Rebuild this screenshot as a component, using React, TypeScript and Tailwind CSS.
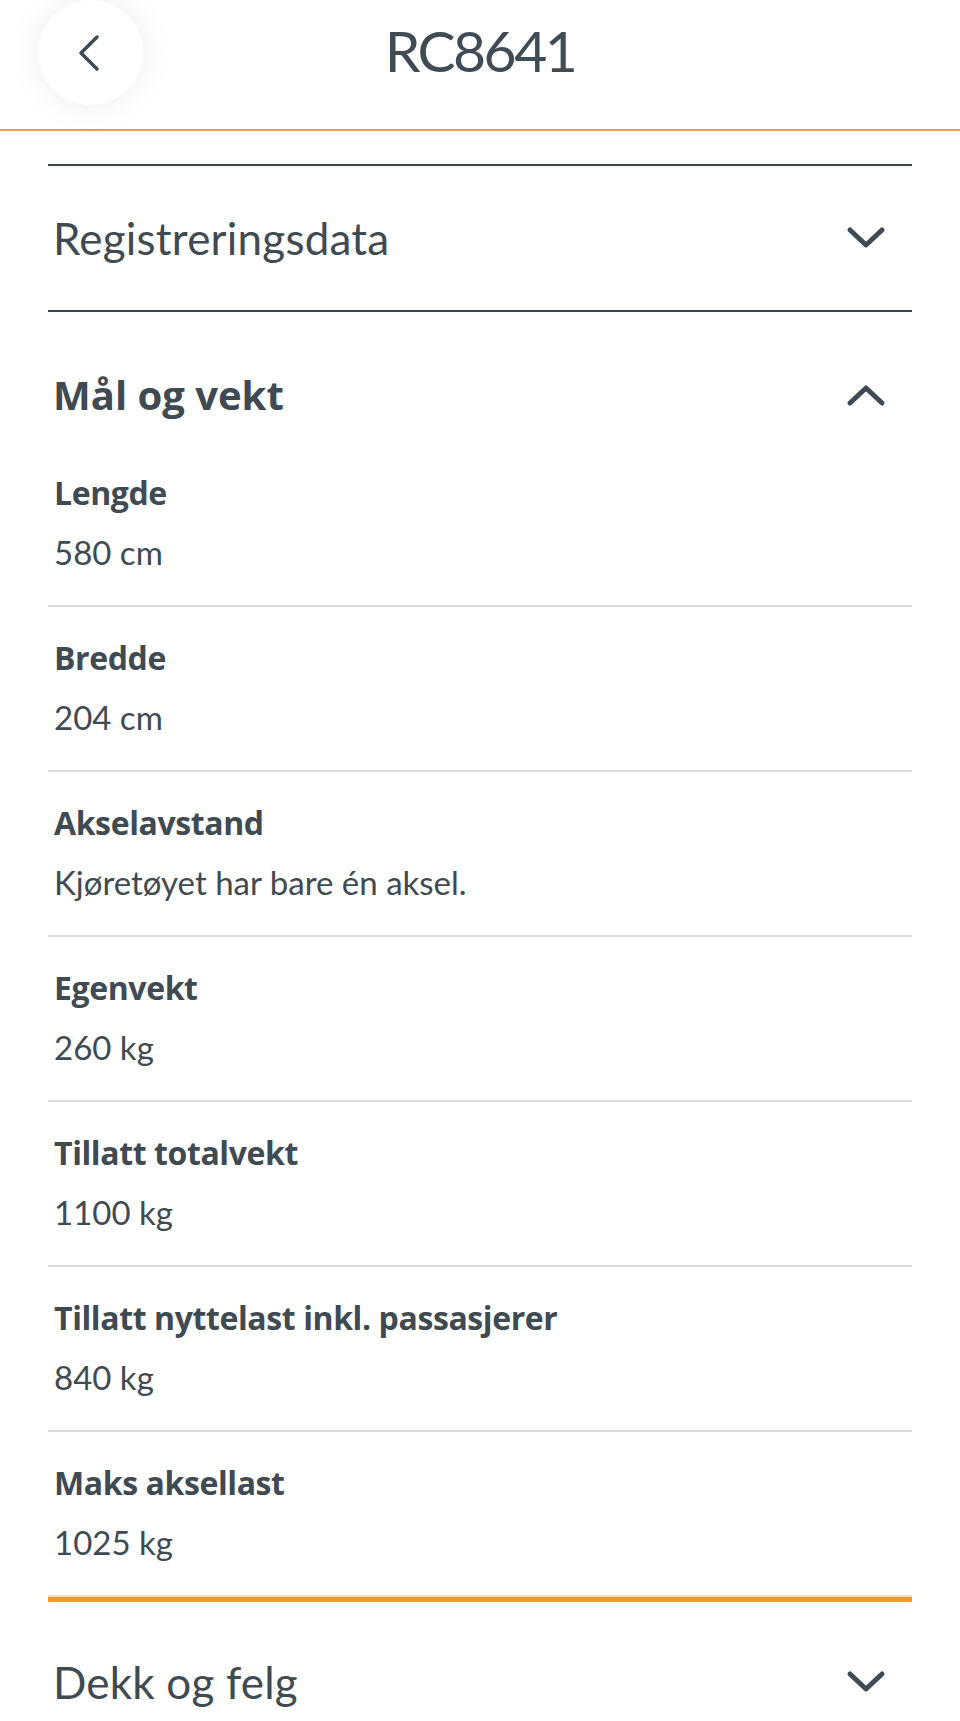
import type { ReactNode } from 'react'

const rows = [
  { label: 'Lengde', value: '580 cm' },
  { label: 'Bredde', value: '204 cm' },
  { label: 'Akselavstand', value: 'Kjøretøyet har bare én aksel.' },
  { label: 'Egenvekt', value: '260 kg' },
  { label: 'Tillatt totalvekt', value: '1100 kg' },
  { label: 'Tillatt nyttelast inkl. passasjerer', value: '840 kg' },
  { label: 'Maks aksellast', value: '1025 kg' },
]

function Chevron({ up = false }: { up?: boolean }) {
  return (
    <svg width="40" height="24" viewBox="0 0 40 24" fill="none" className="shrink-0">
      <path
        d={up ? 'M4 20 L20 5 L36 20' : 'M4 4 L20 19 L36 4'}
        stroke="#3f4a52"
        strokeWidth="5"
        strokeLinecap="round"
        strokeLinejoin="round"
      />
    </svg>
  )
}

function SectionHead({ children, open = false }: { children: ReactNode; open?: boolean }) {
  return (
    <div className="flex items-center justify-between pl-[5px] pr-[26px]">
      <span
        className={
          open
            ? "font-['Open_Sans','Noto_Sans',sans-serif] text-[40px] leading-[52px] font-bold text-[#3f4a52]"
            : 'text-[44px] leading-[52px] font-normal tracking-[0.2px] text-[#3f4a52]'
        }
      >
        {children}
      </span>
      <Chevron up={open} />
    </div>
  )
}

export default function App() {
  return (
    <div className="min-h-[1721px] bg-white font-['Lato','Noto_Sans',sans-serif] text-[#3f4a52]">
      <header className="grid grid-cols-[1fr_auto_1fr] h-[131px] border-b-2 border-[#e3a24c] bg-white">
        <div className="pl-[38px]">
          <button
            className="flex items-center justify-center w-[105px] h-[105px] rounded-full bg-white shadow-[0_0_36px_rgba(0,0,0,0.07)]"
            aria-label="Tilbake"
          >
            <svg width="24" height="38" viewBox="0 0 24 38" fill="none" className="-ml-[4px]">
              <path d="M20 3 L4 19 L20 35" stroke="#3f4a52" strokeWidth="3.5" strokeLinecap="round" strokeLinejoin="round" />
            </svg>
          </button>
        </div>
        <h1 className="pt-[16px] text-[57px] leading-[68px] font-normal tracking-[-2.5px] text-[#414b53]">RC8641</h1>
        <div />
      </header>

      <main className="px-[48px] pt-[33px]">
        <div className="border-t-2 border-[#3b454c]" />

        <div className="h-[146px] flex flex-col justify-center border-b-2 border-[#3b454c]">
          <SectionHead>Registreringsdata</SectionHead>
        </div>

        <section>
          <div className="pt-[57px] pb-[21px]">
            <SectionHead open>Mål og vekt</SectionHead>
          </div>

          {rows.map((row, i) => (
            <div
              key={row.label}
              className={`pl-[6px] pt-[27px] pb-[29px] ${i < rows.length - 1 ? 'border-b-2 border-[#dcdcdc]' : ''}`}
            >
              <div className="font-['Open_Sans','Noto_Sans',sans-serif] text-[32px] leading-[48px] font-bold tracking-[-0.4px]">
                {row.label}
              </div>
              <div className="mt-[11px] text-[33px] leading-[48px] font-normal">{row.value}</div>
            </div>
          ))}

          <div className="h-[2px] bg-[#f9dcbc]" />
          <div className="h-[5px] bg-[#f39a2f]" />
        </section>

        <div className="pt-[54px] pb-[40px]">
          <SectionHead>Dekk og felg</SectionHead>
        </div>
      </main>
    </div>
  )
}
